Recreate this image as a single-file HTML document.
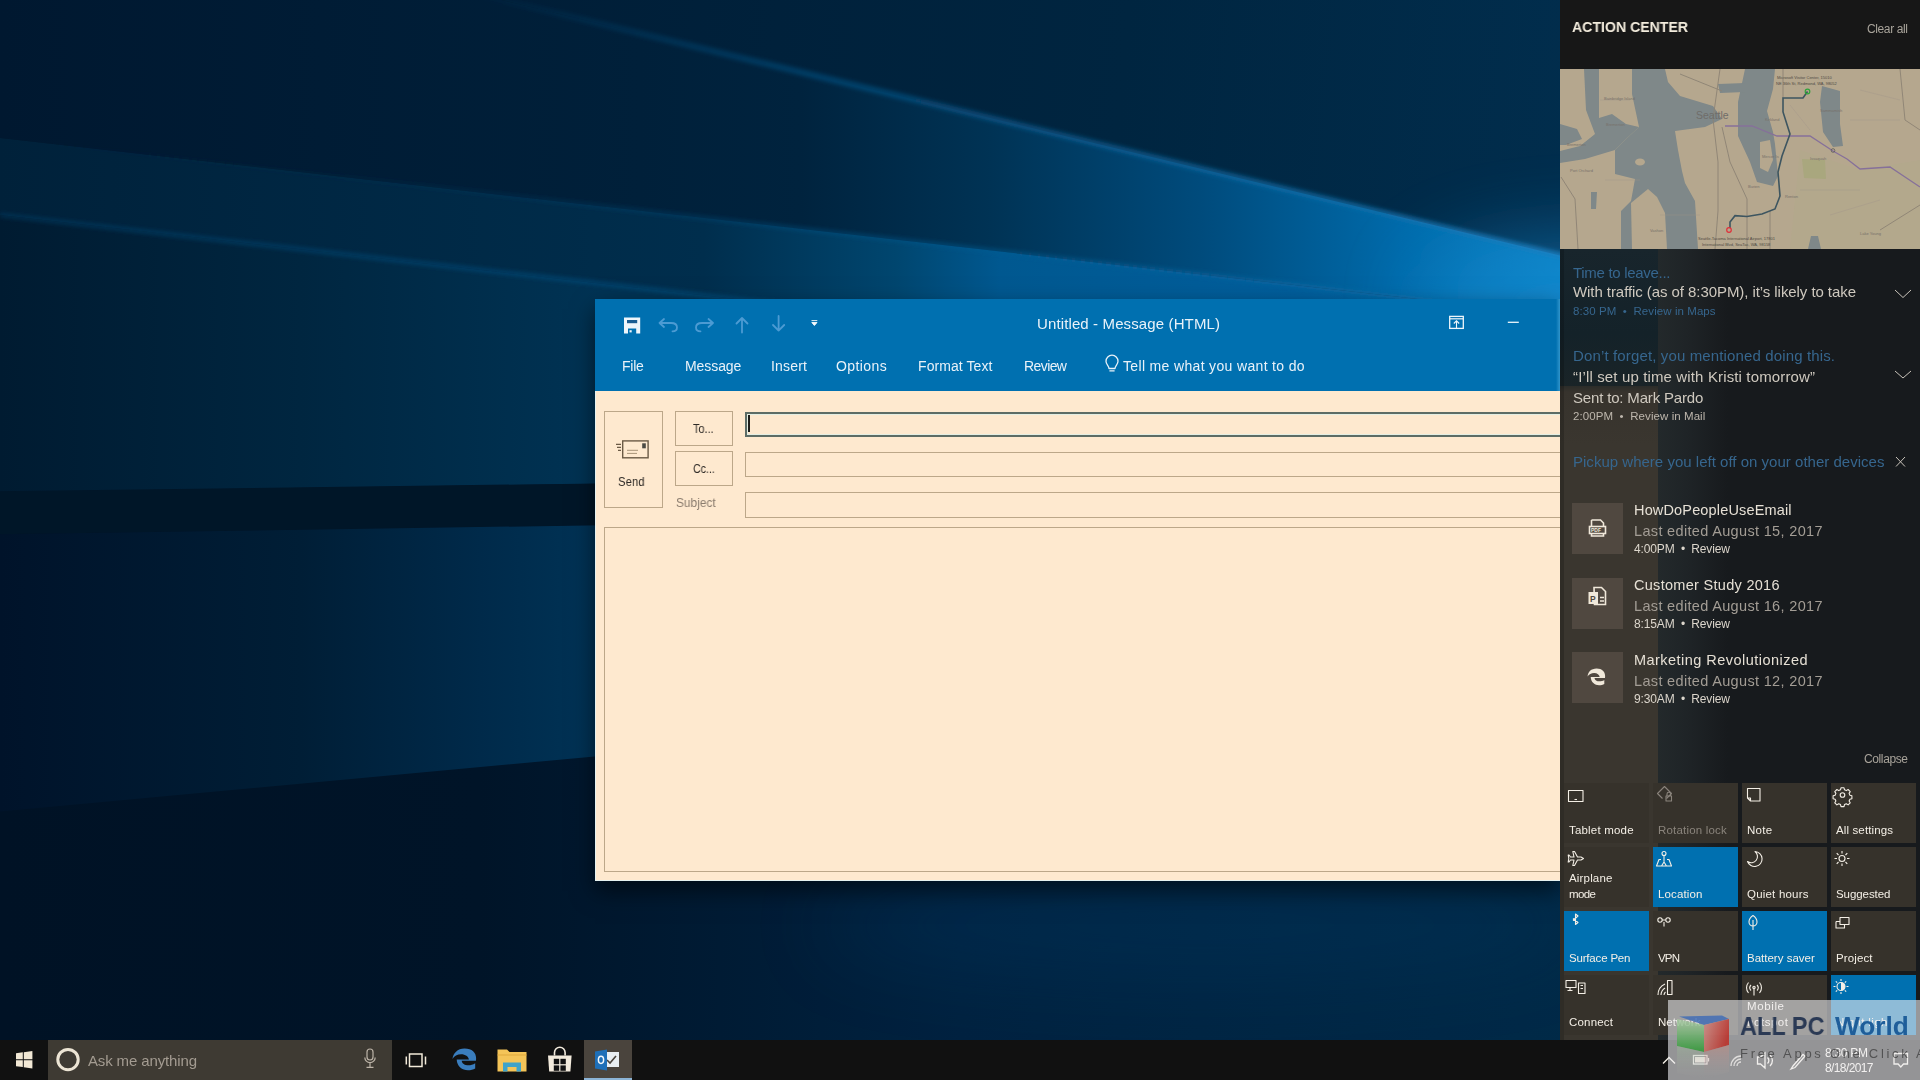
<!DOCTYPE html>
<html><head><meta charset="utf-8">
<style>
html,body{-webkit-font-smoothing:antialiased;margin:0;padding:0;width:1920px;height:1080px;overflow:hidden;background:#031a33;font-family:"Liberation Sans",sans-serif;}
.a{position:absolute;}
.t{position:absolute;white-space:pre;line-height:1;will-change:transform;}
#wall{position:absolute;left:0;top:0;width:1920px;height:1040px;}
#win{position:absolute;left:595px;top:299px;width:965px;height:582px;background:#fee9cf;box-shadow:0 10px 22px rgba(0,0,0,0.55);}
#ribbon{position:absolute;left:0;top:0;width:965px;height:92px;background:#0070b0;}
#ac{position:absolute;left:1560px;top:0;width:360px;height:1040px;background:#1b1d21;overflow:hidden;}
#tb{position:absolute;left:0;top:1040px;width:1920px;height:40px;background:#111111;}
</style></head><body>
<svg id="wall" width="1920" height="1040" viewBox="0 0 1920 1040">
 <defs>
  <filter id="bl2" filterUnits="userSpaceOnUse" x="-200" y="-200" width="2320" height="1440"><feGaussianBlur stdDeviation="2"/></filter>
  <filter id="bl8" filterUnits="userSpaceOnUse" x="-200" y="-200" width="2320" height="1440"><feGaussianBlur stdDeviation="8"/></filter>
  <filter id="bl40" filterUnits="userSpaceOnUse" x="-200" y="-200" width="2320" height="1440"><feGaussianBlur stdDeviation="40"/></filter>
  <linearGradient id="gTop" gradientUnits="userSpaceOnUse" x1="0" y1="0" x2="1600" y2="150">
   <stop offset="0" stop-color="#001830"/>
   <stop offset="0.7" stop-color="#002540"/>
   <stop offset="1" stop-color="#012e4e"/>
  </linearGradient>
  <linearGradient id="gA" gradientUnits="userSpaceOnUse" x1="0" y1="0" x2="1600" y2="0">
   <stop offset="0" stop-color="#001830"/>
   <stop offset="0.4" stop-color="#00203a"/>
   <stop offset="0.5" stop-color="#00233e"/>
   <stop offset="0.62" stop-color="#003355"/>
   <stop offset="0.75" stop-color="#004b7c"/>
   <stop offset="0.875" stop-color="#006aaa"/>
   <stop offset="1" stop-color="#0a86c8"/>
  </linearGradient>
  <linearGradient id="gB" gradientUnits="userSpaceOnUse" x1="0" y1="0" x2="1600" y2="0">
   <stop offset="0" stop-color="#00213a"/>
   <stop offset="0.44" stop-color="#002e4d"/>
   <stop offset="0.56" stop-color="#00466f"/>
   <stop offset="0.625" stop-color="#005890"/>
   <stop offset="0.81" stop-color="#005e9c"/>
   <stop offset="1" stop-color="#0a7cc0"/>
  </linearGradient>
  <linearGradient id="gP1" gradientUnits="userSpaceOnUse" x1="0" y1="0" x2="600" y2="0">
   <stop offset="0" stop-color="#001b31"/>
   <stop offset="0.5" stop-color="#002640"/>
   <stop offset="1" stop-color="#003354"/>
  </linearGradient>
  <linearGradient id="gP2" gradientUnits="userSpaceOnUse" x1="0" y1="0" x2="600" y2="0">
   <stop offset="0" stop-color="#00132a"/>
   <stop offset="0.5" stop-color="#001e36"/>
   <stop offset="0.8" stop-color="#002a4a"/>
   <stop offset="1" stop-color="#003356"/>
  </linearGradient>
  <linearGradient id="gBot" gradientUnits="userSpaceOnUse" x1="0" y1="0" x2="1600" y2="0">
   <stop offset="0" stop-color="#001225"/>
   <stop offset="0.3" stop-color="#001428"/>
   <stop offset="0.6" stop-color="#002240"/>
   <stop offset="1" stop-color="#002a48"/>
  </linearGradient>
  <linearGradient id="sA" gradientUnits="userSpaceOnUse" x1="460" y1="0" x2="1620" y2="0"><stop offset="0" stop-color="#0a5a90" stop-opacity="0"/><stop offset="0.3" stop-color="#0a5a90" stop-opacity="0.5"/><stop offset="1" stop-color="#1a7ab8" stop-opacity="0.9"/></linearGradient>
  <linearGradient id="sB" gradientUnits="userSpaceOnUse" x1="0" y1="0" x2="1620" y2="0"><stop offset="0" stop-color="#034068" stop-opacity="0"/><stop offset="0.2" stop-color="#034068" stop-opacity="0.1"/><stop offset="0.6" stop-color="#0a5a90" stop-opacity="0.6"/><stop offset="1" stop-color="#1a7ab8" stop-opacity="0.8"/></linearGradient>
  <linearGradient id="sC" gradientUnits="userSpaceOnUse" x1="0" y1="0" x2="1620" y2="0"><stop offset="0" stop-color="#064c7c" stop-opacity="0.4"/><stop offset="0.4" stop-color="#064c7c" stop-opacity="0.75"/><stop offset="1" stop-color="#1a7ab8" stop-opacity="0.8"/></linearGradient>
 </defs>
 <rect width="1920" height="1040" fill="url(#gBot)"/>
 <g>
  <path d="M-50 -50H1620V270L460 -10L-50 -10Z" fill="url(#gTop)"/>
  <path d="M460 -10L1620 270L1620 322L0 138L-50 138L-50 -10Z" fill="url(#gA)"/>
  <path d="M-50 138L0 138L1620 322L1620 400L0 215L-50 215Z" fill="url(#gB)"/>
  <path d="M-50 215L0 215L1620 400L1620 470L0 492L-50 492Z" fill="url(#gP1)"/>
  <path d="M-50 492L1620 470L1620 510L-50 535Z" fill="#001628"/>
  <path d="M-50 535L1620 510L1620 690L600 756L-50 816Z" fill="url(#gP2)"/>
 </g>
 <path d="M460 -10L1620 270" stroke="url(#sA)" stroke-width="6" filter="url(#bl2)"/>
 <path d="M0 138L1620 322" stroke="url(#sB)" stroke-width="4" filter="url(#bl2)"/>
 <path d="M0 215L1620 400" stroke="url(#sC)" stroke-width="4" filter="url(#bl2)"/>
 <ellipse cx="1200" cy="925" rx="380" ry="50" fill="#003a66" opacity="0.3" filter="url(#bl40)"/>
 <ellipse cx="1580" cy="300" rx="160" ry="60" fill="#1a90d8" opacity="0.5" filter="url(#bl40)"/>
</svg>

<div id="win">
 <div id="ribbon"></div>
</div>
<div class="a" style="left:595px;top:391px;width:1px;height:490px;background:#e6f2f0;"></div>
<div class="a" style="left:1556px;top:299px;width:4px;height:92px;background:linear-gradient(90deg,rgba(60,160,215,0),rgba(70,165,215,0.7));"></div>
<div class="a" style="left:595px;top:880px;width:965px;height:1px;background:#e6f2f0;"></div>
<!-- send box -->
<div class="a" style="left:604px;top:411px;width:57px;height:95px;border:1px solid #bca789;"></div>
<div class="a" style="left:675px;top:411px;width:56px;height:33px;border:1px solid #bca789;"></div>
<div class="a" style="left:675px;top:451px;width:56px;height:33px;border:1px solid #bca789;"></div>
<div class="a" style="left:745px;top:412px;width:900px;height:21px;border:2px solid #5d6c65;box-shadow:inset 0 0 0 1px #e3eee4;"></div>
<div class="a" style="left:748px;top:415px;width:1.5px;height:17px;background:#1d1d1a;"></div>
<div class="a" style="left:745px;top:452px;width:900px;height:23px;border:1px solid #bca789;"></div>
<div class="a" style="left:745px;top:492px;width:900px;height:24px;border:1px solid #bca789;"></div>
<div class="a" style="left:604px;top:527px;width:1000px;height:343px;border:1px solid #bca789;"></div>
<svg class="a" style="left:612px;top:436px" width="40" height="26" viewBox="612 436 40 26">
 <rect x="622.7" y="440.9" width="25.4" height="16.9" fill="none" stroke="#6b5a45" stroke-width="1.4"/>
 <rect x="642.2" y="443.3" width="3.6" height="5" fill="#4b4a44"/>
 <path d="M627 450.3h11M627 453.4h10" stroke="#a89478" stroke-width="1"/>
 <path d="M616 444.3h5M617 447.3h4M618 450.3h3" stroke="#6b5a45" stroke-width="1.2"/>
</svg>
<!-- QAT icons -->
<svg class="a" style="left:620px;top:312px" width="200" height="26" viewBox="620 312 200 26">
 <path d="M624 317.6h16.2v16H636.2v-5.2h-8.2v5.2H624z" fill="#eef6fb"/>
 <rect x="627" y="320" width="10.2" height="3.2" fill="#1a5d92"/>
 <rect x="629.5" y="330.2" width="2.2" height="2.2" fill="#eef6fb"/>
 <g fill="none" stroke="#4c9bd3" stroke-width="1.8" stroke-linecap="round" stroke-linejoin="round">
  <path d="M664 319l-4.5 4 4.5 4M660 323h11c4 0 6 2 6 4.5s-2 3.8-4.5 3.8"/>
  <path d="M708.5 319l4.5 4-4.5 4M713 323h-11c-4 0-6 2-6 4.5s2 3.8 4.5 3.8"/>
  <path d="M742 332.5V318M736.5 323.5l5.5-5.5 5.5 5.5"/>
  <path d="M778.6 316v14.5M773 325l5.6 5.6 5.6-5.6"/>
 </g>
 <path d="M811.5 320.6h5.8M811.8 322.5h5.2l-2.6 3z" stroke="#f4f8fb" stroke-width="0.9" fill="#f4f8fb"/>
</svg>
<svg class="a" style="left:1445px;top:312px" width="80" height="22" viewBox="1445 312 80 22">
 <rect x="1449.7" y="316.4" width="13.6" height="12" fill="none" stroke="#eef6fb" stroke-width="1.3"/>
 <path d="M1450 318.8h13" stroke="#eef6fb" stroke-width="1.2"/>
 <path d="M1456.5 328v-7M1453.8 323.5l2.7-2.7 2.7 2.7" stroke="#eef6fb" stroke-width="1.1" fill="none"/>
 <path d="M1507.8 322.3h11" stroke="#eef6fb" stroke-width="1.3"/>
</svg>
<svg class="a" style="left:1100px;top:352px" width="24" height="24" viewBox="1100 352 24 24">
 <path d="M1109 368.5c0-2.5-3-4-3-7.3a6 6 0 0 1 12 0c0 3.3-3 4.8-3 7.3z M1109.4 370.8h5.2" fill="none" stroke="#e9f2f9" stroke-width="1.3" stroke-linejoin="round"/>
</svg>
<div class="t" style="left:1036.60px;top:315.80px;font-size:15px;letter-spacing:0.122px;color:#e9f2f9;">Untitled - Message (HTML)</div>
<div class="t" style="left:622.00px;top:359.39px;font-size:14px;letter-spacing:-0.247px;color:#e9f2f9;">File</div>
<div class="t" style="left:685.00px;top:359.39px;font-size:14px;letter-spacing:-0.073px;color:#e9f2f9;">Message</div>
<div class="t" style="left:771.00px;top:359.39px;font-size:14px;letter-spacing:0.200px;color:#e9f2f9;">Insert</div>
<div class="t" style="left:836.00px;top:359.39px;font-size:14px;letter-spacing:0.412px;color:#e9f2f9;">Options</div>
<div class="t" style="left:917.50px;top:359.39px;font-size:14px;letter-spacing:0.076px;color:#e9f2f9;">Format Text</div>
<div class="t" style="left:1024.30px;top:359.39px;font-size:14px;letter-spacing:-0.584px;color:#e9f2f9;">Review</div>
<div class="t" style="left:1123.00px;top:359.39px;font-size:14px;letter-spacing:0.340px;color:#e9f2f9;">Tell me what you want to do</div>
<div class="t" style="left:618.00px;top:475.39px;font-size:13px;letter-spacing:0.000px;color:#2e2a26;transform:scaleX(0.8730);transform-origin:0.00px 0;">Send</div>
<div class="t" style="left:693.00px;top:422.51px;font-size:12.5px;letter-spacing:0.000px;color:#2e2a26;transform:scaleX(0.8720);transform-origin:0.00px 0;">To...</div>
<div class="t" style="left:693.00px;top:462.81px;font-size:12.5px;letter-spacing:0.000px;color:#2e2a26;transform:scaleX(0.8487);transform-origin:0.00px 0;">Cc...</div>
<div class="t" style="left:675.70px;top:496.61px;font-size:12.5px;letter-spacing:0.000px;color:#8a7c6e;transform:scaleX(0.9523);transform-origin:0.00px 0;">Subject</div>

<div class="a" style="left:1560px;top:0;width:360px;height:1040px;background:#171a1d;"></div>
<div class="a" style="left:1560px;top:0;width:360px;height:69px;background:#171717;"></div>
<div class="a" style="left:1658px;top:249px;width:70px;height:791px;background:linear-gradient(90deg,#23292b,#1f2427 40%,rgba(23,26,29,0));"></div>
<div class="a" style="left:1560px;top:249px;width:98px;height:142px;background:linear-gradient(180deg,#18252c,#142229 60%,#1a2427);"></div>
<div class="a" style="left:1560px;top:386px;width:98px;height:654px;background:linear-gradient(180deg,#2b2c29,#37332d 6px,#3a362f 60px);"></div>
<div class="a" style="left:1560px;top:249px;width:4px;height:791px;background:rgba(0,0,0,0.18);"></div>
<svg class="a" style="left:1560px;top:69px" width="360" height="180" viewBox="1560 69 360 180">
 <defs><filter id="mbl" x="-10%" y="-10%" width="120%" height="120%"><feGaussianBlur stdDeviation="0.6"/></filter></defs>
 <rect x="1560" y="69" width="360" height="180" fill="#b5a78e"/>
 <g filter="url(#mbl)">
 <path d="M1800 150L1860 170L1920 160V249H1790Z" fill="#b3a88c"/>
 <path d="M1802 159L1825 160L1826 179L1804 178Z" fill="#a9a77e"/>
 <g fill="#7f8889">
  <path d="M1632 69L1665 69L1668 82L1680 96L1713 106L1722 119L1705 127L1675 131L1678 150L1682 171L1685 183L1695 201L1698 249L1621 249L1621 211L1631 201L1635 179L1615 174L1615 150L1625 140L1639 127L1632 94Z"/>
  <path d="M1584 69L1599 69L1599 118L1612 114L1626 124L1639 127L1625 140L1615 150L1585 159L1560 163L1560 151L1580 146L1595 134L1586 110Z"/>
  <path d="M1560 124L1577 129L1582 139L1566 145L1560 145Z"/>
  <path d="M1591 192L1597 192L1596 209L1591 209Z"/>
  <path d="M1745 69L1775 69L1773 89L1767 111L1773 132L1775 144L1778 176L1773 186L1757 182L1750 162L1738 136L1738 102Z"/>
  <path d="M1718 84L1745 83L1745 92L1720 93Z"/>
  <path d="M1822 86L1840 91L1840 124L1843 146L1833 147L1823 132L1820 102Z"/>
  <path d="M1811 236L1818 236L1821 249L1808 249Z"/>
 </g>
 <g fill="#b5a78e">
  <path d="M1631 203L1648 189L1657 197L1665 213L1667 249L1632 249Z"/>
  <path d="M1760 142L1770 140L1773 160L1768 172L1760 168Z"/>
  <ellipse cx="1640" cy="162" rx="5" ry="3.5"/>
 </g>
 <g fill="none" stroke="#8c8274" stroke-width="0.9">
  <path d="M1720 69L1713 119L1718 162L1718 211L1715 249"/>
  <path d="M1722 127L1730 162L1747 199L1747 249"/>
  <path d="M1783 69L1783 98M1770 211L1770 249M1561 177L1575 199L1578 249M1680 74L1722 91M1880 230L1920 205M1900 69L1905 120L1920 130"/>
 </g>
 <g fill="none" stroke="#a0968a" stroke-width="0.6" opacity="0.7">
  <path d="M1600 100H1630M1605 180H1640M1660 215H1700M1800 190H1860M1830 215L1880 200M1790 105L1810 130M1860 90L1900 100M1850 120L1900 120"/>
 </g>
 </g>
 <path d="M1725 126L1752 126L1777 136L1810 136L1833 151L1847 159L1860 169L1875 168L1890 167L1905 177L1920 187" fill="none" stroke="#86709a" stroke-width="1.3"/>
 <path d="M1807.5 91.5L1803 98L1783 98L1783 112L1790 134L1782 156L1778 172L1780 196L1775 209L1762 214L1747 216.5L1735 215.7L1730 222L1730 228" fill="none" stroke="#3d5560" stroke-width="1.6"/>
 <circle cx="1833" cy="150.5" r="1.8" fill="none" stroke="#5a5a5a" stroke-width="0.8"/>
 <circle cx="1807.5" cy="91.5" r="2.3" fill="none" stroke="#2fa33a" stroke-width="1.2"/>
 <circle cx="1729" cy="230" r="2.3" fill="none" stroke="#e0303a" stroke-width="1.2"/>
 <text x="1696" y="118.5" font-size="10.5" fill="#6f6d69" font-family="Liberation Sans">Seattle</text>
 <g fill="#4f4a43" font-size="4" font-family="Liberation Sans">
  <text x="1777" y="79">Microsoft Visitor Center, 15010</text>
  <text x="1776" y="85">NE 36th St, Redmond, WA, 98052</text>
  <text x="1698" y="240">Seattle-Tacoma International Airport, 17801</text>
  <text x="1702" y="246">International Blvd, SeaTac, WA, 98158</text>
 </g>
 <g fill="#77716a" font-size="4" font-family="Liberation Sans">
  <text x="1604" y="100">Bainbridge Island</text><text x="1606" y="126">Bremerton</text>
  <text x="1567" y="146">Bremerton</text><text x="1570" y="172">Port Orchard</text>
  <text x="1765" y="121">Kirkland</text><text x="1820" y="112">Sammamish</text>
  <text x="1810" y="160">Issaquah</text><text x="1762" y="158">Mercer Is</text>
  <text x="1785" y="198">Renton</text><text x="1748" y="188">Burien</text>
  <text x="1650" y="232">Vashon</text><text x="1860" y="235">Lake Young</text>
 </g>
</svg>

<div class="a" style="left:1572px;top:503px;width:51px;height:51px;background:#504840;"></div>
<div class="a" style="left:1572px;top:578px;width:51px;height:51px;background:#504840;"></div>
<div class="a" style="left:1572px;top:652px;width:51px;height:51px;background:#504840;"></div>
<svg class="a" style="left:1880px;top:280px" width="40" height="200" viewBox="1880 280 40 200">
 <g fill="none" stroke="#c9c3ba" stroke-width="1">
 <path d="M1895 290l8 7.5 8-7.5"/>
 <path d="M1895 371l8 7 8-7"/>
 <path d="M1896 457l9 9.5M1905 457l-9 9.5"/>
 </g>
</svg>
<div class="a" style="left:1564px;top:783px;width:85px;height:60px;background:#36322b;"></div>
<div class="a" style="left:1653px;top:783px;width:85px;height:60px;background:#36322b;"></div>
<div class="a" style="left:1742px;top:783px;width:85px;height:60px;background:#36322b;"></div>
<div class="a" style="left:1831px;top:783px;width:85px;height:60px;background:#36322b;"></div>
<div class="a" style="left:1564px;top:847px;width:85px;height:60px;background:#36322b;"></div>
<div class="a" style="left:1653px;top:847px;width:85px;height:60px;background:#0070b0;"></div>
<div class="a" style="left:1742px;top:847px;width:85px;height:60px;background:#36322b;"></div>
<div class="a" style="left:1831px;top:847px;width:85px;height:60px;background:#36322b;"></div>
<div class="a" style="left:1564px;top:911px;width:85px;height:60px;background:#0070b0;"></div>
<div class="a" style="left:1653px;top:911px;width:85px;height:60px;background:#36322b;"></div>
<div class="a" style="left:1742px;top:911px;width:85px;height:60px;background:#0070b0;"></div>
<div class="a" style="left:1831px;top:911px;width:85px;height:60px;background:#36322b;"></div>
<div class="a" style="left:1564px;top:975px;width:85px;height:60px;background:#36322b;"></div>
<div class="a" style="left:1653px;top:975px;width:85px;height:60px;background:#36322b;"></div>
<div class="a" style="left:1742px;top:975px;width:85px;height:60px;background:#36322b;"></div>
<div class="a" style="left:1831px;top:975px;width:85px;height:60px;background:#0070b0;"></div>

<div class="t" style="left:1572.20px;top:19.40px;font-size:15px;letter-spacing:0.000px;color:#f3ecdd;font-weight:700;transform:scaleX(0.9408);transform-origin:0.00px 0;">ACTION CENTER</div>
<div class="t" style="left:1866.60px;top:23.24px;font-size:12px;letter-spacing:-0.380px;color:#a8a39a;">Clear all</div>
<div class="t" style="left:1573.00px;top:264.80px;font-size:15px;letter-spacing:-0.300px;color:#36668e;">Time to leave...</div>
<div class="t" style="left:1573.00px;top:283.90px;font-size:15px;letter-spacing:-0.068px;color:#cfc9bf;">With traffic (as of 8:30PM), it’s likely to take</div>
<div class="t" style="left:1573.00px;top:306.26px;font-size:11.5px;letter-spacing:0.071px;color:#36668e;">8:30 PM  •  Review in Maps</div>
<div class="t" style="left:1573.00px;top:347.90px;font-size:15px;letter-spacing:0.137px;color:#36668e;">Don’t forget, you mentioned doing this.</div>
<div class="t" style="left:1573.00px;top:368.90px;font-size:15px;letter-spacing:0.139px;color:#cfc9bf;">“I’ll set up time with Kristi tomorrow”</div>
<div class="t" style="left:1573.00px;top:389.60px;font-size:15px;letter-spacing:-0.168px;color:#cfc9bf;">Sent to: Mark Pardo</div>
<div class="t" style="left:1573.00px;top:410.86px;font-size:11.5px;letter-spacing:0.072px;color:#bdb6ac;">2:00PM  •  Review in Mail</div>
<div class="t" style="left:1573.00px;top:453.90px;font-size:15px;letter-spacing:0.015px;color:#36668e;">Pickup where you left off on your other devices</div>
<div class="t" style="left:1634.00px;top:503.12px;font-size:14.5px;letter-spacing:0.155px;color:#e6e0d5;">HowDoPeopleUseEmail</div>
<div class="t" style="left:1634.00px;top:523.52px;font-size:14.5px;letter-spacing:0.335px;color:#a39d95;">Last edited August 15, 2017</div>
<div class="t" style="left:1634.00px;top:543.14px;font-size:12px;letter-spacing:-0.143px;color:#dcd6cc;">4:00PM  •  Review</div>
<div class="t" style="left:1634.00px;top:578.12px;font-size:14.5px;letter-spacing:0.294px;color:#e6e0d5;">Customer Study 2016</div>
<div class="t" style="left:1634.00px;top:598.52px;font-size:14.5px;letter-spacing:0.335px;color:#a39d95;">Last edited August 16, 2017</div>
<div class="t" style="left:1634.00px;top:618.14px;font-size:12px;letter-spacing:-0.143px;color:#dcd6cc;">8:15AM  •  Review</div>
<div class="t" style="left:1634.00px;top:653.12px;font-size:14.5px;letter-spacing:0.464px;color:#e6e0d5;">Marketing Revolutionized</div>
<div class="t" style="left:1634.00px;top:673.52px;font-size:14.5px;letter-spacing:0.335px;color:#a39d95;">Last edited August 12, 2017</div>
<div class="t" style="left:1634.00px;top:693.14px;font-size:12px;letter-spacing:-0.143px;color:#dcd6cc;">9:30AM  •  Review</div>
<div class="t" style="left:1863.80px;top:752.64px;font-size:12px;letter-spacing:-0.383px;color:#a8a39a;">Collapse</div>

<!-- tile icons -->
<svg class="a" style="left:1560px;top:780px" width="360" height="260" viewBox="1560 780 360 260">
 <g fill="none" stroke="#f4efe6" stroke-width="1.1" stroke-linejoin="round">
  <rect x="1568.5" y="790.5" width="14.5" height="11"/><path d="M1574.5 799.5h2.5"/>
  <g stroke="#8a847c"><path d="M1664.5 786.5l7 7-5 5M1664.5 786.5l-7 7 5 5"/><rect x="1666" y="796" width="5.5" height="5"/><path d="M1667 796v-2a1.8 1.8 0 0 1 3.6 0v2"/></g>
  <path d="M1747.5 788.5h12.5v12.5h-9.5l-3-3z M1747.5 798l3 0v3"/>
  <circle cx="1842.5" cy="795" r="2.3"/><path d="M1841 787.8h3l.5 2 1.8.8 1.8-1.1 2.1 2.1-1.1 1.8.8 1.8 2 .5v3l-2 .5-.8 1.8 1.1 1.8-2.1 2.1-1.8-1.1-1.8.8-.5 2h-3l-.5-2-1.8-.8-1.8 1.1-2.1-2.1 1.1-1.8-.8-1.8-2-.5v-3l2-.5.8-1.8-1.1-1.8 2.1-2.1 1.8 1.1 1.8-.8z"/>
  <path d="M1583.5 858.5L1581 857H1577.5L1574.5 851.5H1572.8L1574 857H1570.5L1569 855H1568.2L1568.8 858.5L1568.2 862H1569L1570.5 860H1574L1572.8 865.5H1574.5L1577.5 860H1581Z"/>
  <circle cx="1664" cy="853.5" r="2"/><path d="M1664 855.5v6M1661 859.5h-2l-2.5 6.5h15l-2.5-6.5h-2M1661.5 866l2.5-4 2.5 4"/>
  <path d="M1755 851.5a7.5 7.5 0 1 1-7.5 10 6 6 0 0 0 7.5-10z"/>
  <circle cx="1842" cy="858.5" r="3"/><path d="M1842 851v2.5M1842 863.5v2.5M1834.5 858.5h2.5M1847 858.5h2.5M1836.7 853.2l1.8 1.8M1845.5 862l1.8 1.8M1836.7 863.8l1.8-1.8M1845.5 855l1.8-1.8"/>
  <path d="M1573 918.5l5 4-2.5 2V914l2.5 2-5 4.5"/>
  <circle cx="1660" cy="920" r="2.2"/><circle cx="1668" cy="920" r="2.2"/><path d="M1662.2 920h3.6M1664 922v4.5"/>
  <path d="M1753 915.5c3 2 4 4 4 6.5a4 4 0 0 1-8 0c0-2.5 1-4.5 4-6.5zM1753 920v10"/>
  <rect x="1840" y="917.5" width="9" height="7"/><path d="M1836 921.5h4M1836 921.5v6.5h8.5v-3.5"/>
  <rect x="1566" y="980.5" width="10" height="7"/><path d="M1570 987.5v3M1567.5 990.5h5"/><rect x="1578.5" y="983" width="6.5" height="10.5"/><path d="M1580.5 985.5h2.5M1580.5 988.5h2.5"/>
  <path d="M1658 995a12 12 0 0 1 7-11M1661 995a8.5 8.5 0 0 1 4-7M1664 995a4.5 4.5 0 0 1 1.5-3"/><rect x="1667.5" y="980.5" width="4.5" height="14"/>
  <path d="M1754 987.5v8M1751 985a4 4 0 0 0 0 5.5M1757 985a4 4 0 0 1 0 5.5M1748.5 982.5a8 8 0 0 0 0 10.5M1759.5 982.5a8 8 0 0 1 0 10.5"/><circle cx="1754" cy="987.5" r="1.2"/>
  <circle cx="1841" cy="986.5" r="4"/><path d="M1841 979v2M1841 992v2M1833.5 986.5h2M1846.5 986.5h2M1835.8 981.3l1.4 1.4M1844.8 990.3l1.4 1.4M1835.8 991.7l1.4-1.4M1844.8 982.7l1.4-1.4"/>
 </g>
 <path d="M1841 982.5a4 4 0 0 1 0 8z" fill="#f4efe6"/>
</svg>
<div class="t" style="left:1568.50px;top:825.06px;font-size:11.5px;letter-spacing:0.192px;color:#f4efe6;">Tablet mode</div>
<div class="t" style="left:1657.50px;top:825.06px;font-size:11.5px;letter-spacing:0.181px;color:#8a847c;">Rotation lock</div>
<div class="t" style="left:1746.50px;top:825.06px;font-size:11.5px;letter-spacing:0.245px;color:#f4efe6;">Note</div>
<div class="t" style="left:1835.50px;top:825.06px;font-size:11.5px;letter-spacing:0.127px;color:#f4efe6;">All settings</div>
<div class="t" style="left:1568.50px;top:873.26px;font-size:11.5px;letter-spacing:0.171px;color:#f4efe6;">Airplane</div>
<div class="t" style="left:1568.50px;top:889.26px;font-size:11.5px;letter-spacing:-0.583px;color:#f4efe6;">mode</div>
<div class="t" style="left:1657.50px;top:889.06px;font-size:11.5px;letter-spacing:0.147px;color:#f4efe6;">Location</div>
<div class="t" style="left:1746.50px;top:889.06px;font-size:11.5px;letter-spacing:0.205px;color:#f4efe6;">Quiet hours</div>
<div class="t" style="left:1835.50px;top:889.06px;font-size:11.5px;letter-spacing:-0.071px;color:#f4efe6;">Suggested</div>
<div class="t" style="left:1568.50px;top:953.06px;font-size:11.5px;letter-spacing:-0.181px;color:#f4efe6;">Surface Pen</div>
<div class="t" style="left:1657.50px;top:953.06px;font-size:11.5px;letter-spacing:-0.816px;color:#f4efe6;">VPN</div>
<div class="t" style="left:1746.50px;top:953.06px;font-size:11.5px;letter-spacing:0.001px;color:#f4efe6;">Battery saver</div>
<div class="t" style="left:1835.50px;top:953.06px;font-size:11.5px;letter-spacing:0.122px;color:#f4efe6;">Project</div>
<div class="t" style="left:1568.50px;top:1017.06px;font-size:11.5px;letter-spacing:0.194px;color:#f4efe6;">Connect</div>
<div class="t" style="left:1657.50px;top:1017.06px;font-size:11.5px;letter-spacing:0.040px;color:#f4efe6;">Network</div>
<div class="t" style="left:1746.50px;top:1001.26px;font-size:11.5px;letter-spacing:0.627px;color:#f4efe6;">Mobile</div>
<div class="t" style="left:1746.50px;top:1017.26px;font-size:11.5px;letter-spacing:0.547px;color:#f4efe6;">hotspot</div>
<div class="t" style="left:1835.50px;top:1017.06px;font-size:11.5px;letter-spacing:0.388px;color:#f4efe6;">Night light</div>

<!-- pickup icons -->
<svg class="a" style="left:1580px;top:510px" width="40" height="190" viewBox="1580 510 40 190">
 <g fill="none" stroke="#f0e8da" stroke-width="1.6">
  <path d="M1591.5 520h9l3 3v4M1591.5 533v3h12v-3M1591.5 527v-7"/>
  <rect x="1589.5" y="526.5" width="16" height="7"/>
  <path d="M1594 587.5h7.5l4 4v13h-11z"/>
  <path d="M1600 601h4M1600 597.5h4"/>
 </g>
 <g fill="#f0e8da" font-family="Liberation Sans" font-weight="700" font-size="5"><text x="1591" y="532.2">PDF</text></g>
 <rect x="1588.5" y="592" width="9.5" height="12" fill="#f0e8da"/>
 <text x="1590" y="601.5" font-family="Liberation Sans" font-weight="700" font-size="8.5" fill="#504840">P</text>
 <path d="M1596.6 668.5c-5.5 0-8.8 3.6-9 8 1.3-2.3 3.8-3.5 6.5-3.5 3.2 0 5.3 1.8 5.6 4h-9c.2 5.2 4.2 8.2 8.3 8.2 2.1 0 4-.5 5.3-1.3v-4c-1.5 1-3.2 1.4-4.9 1.4-2.7 0-4.7-1.3-4.9-3.4h10.5c.1-.6.1-1.2.1-1.8 0-4.4-3-7.6-8.5-7.6z" fill="#f0e8da"/>
</svg>

<div id="tb"></div>
<div class="a" style="left:48px;top:1040px;width:344px;height:40px;background:#3e3a33;"></div>
<div class="a" style="left:584px;top:1040px;width:48px;height:40px;background:#4a443d;"></div>
<div class="a" style="left:584px;top:1078px;width:48px;height:2px;background:#8cb4d6;"></div>
<svg class="a" style="left:0;top:1040px" width="640" height="40" viewBox="0 1040 640 40">
 <g fill="#f2e8d5">
  <path d="M16 1053.2L22.8 1052.3V1059.2H16Z"/><path d="M23.8 1052.2L32.4 1051V1059.2H23.8Z"/>
  <path d="M16 1060.2H22.8V1067.1L16 1066.2Z"/><path d="M23.8 1060.2H32.4V1068.4L23.8 1067.2Z"/>
 </g>
 <circle cx="68" cy="1059.6" r="10.2" fill="none" stroke="#ece4d4" stroke-width="3"/>
 <g fill="none" stroke="#bdb4a8" stroke-width="1.2">
  <rect x="367" y="1049" width="6" height="11" rx="3"/>
  <path d="M364.8 1057.5a5.2 5.2 0 0 0 10.4 0M370 1063v4M366.5 1067.3h7"/>
 </g>
 <g fill="none" stroke="#f2ead9" stroke-width="1.5">
  <rect x="409.5" y="1054" width="12.5" height="12.5"/>
  <path d="M406.3 1056.5v8M425.5 1056.5v8"/>
 </g>
 <path d="M464.5 1048.5c-7 0-11.5 5-12 10.5 1.5-3 5-4.8 8.6-4.8 4.3 0 7.4 2.3 7.8 5.3h-12.2c.2 6.8 5.6 10.8 11.2 10.8 2.9 0 5.4-.7 7.3-1.8v-5.2c-2.1 1.4-4.5 2-6.8 2-3.6 0-6.4-1.8-6.7-4.6h14.2c.2-.8.2-1.6.2-2.4 0-5.8-4-9.8-11.6-9.8z" fill="#3a7dbd"/>
 <path d="M497.5 1049.5h9.5l2.5 2.5h17v19.5h-29z" fill="#f4c458"/>
 <path d="M497.5 1055h29" stroke="#e0a93d" stroke-width="1"/>
 <path d="M503 1071.5v-9h18v9h-4.5v-4.5h-9v4.5z" fill="#3fa3c9"/>
 <path d="M548 1055.5h23.6l-1.2 16h-21.2z" fill="#f3ebdd"/>
 <path d="M554.5 1055.5v-3a5.3 5.3 0 0 1 10.6 0v3" fill="none" stroke="#f3ebdd" stroke-width="1.6"/>
 <g fill="#111"><rect x="553.8" y="1058.8" width="5.4" height="5.4"/><rect x="560.4" y="1058.8" width="5.4" height="5.4"/><rect x="553.8" y="1065.4" width="5.4" height="5.4"/><rect x="560.4" y="1065.4" width="5.4" height="5.4"/></g>
 <rect x="604" y="1052" width="15" height="15" fill="#e9eef2"/>
 <path d="M607 1060l3 3 6-7" fill="none" stroke="#4a443d" stroke-width="1.6"/>
 <path d="M595 1051.5l12-2v21l-12-2z" fill="#1e6fb8"/>
 <ellipse cx="601" cy="1059.8" rx="2.6" ry="3.6" fill="none" stroke="#f2f6fa" stroke-width="1.5"/>
</svg>
<div class="t" style="left:88.40px;top:1052.50px;font-size:15px;letter-spacing:-0.137px;color:#a39b91;">Ask me anything</div>
<div class="t" style="left:1824.50px;top:1046.84px;font-size:12px;letter-spacing:-0.283px;color:#f7f3ec;">8:30 PM</div>
<div class="t" style="left:1824.50px;top:1061.54px;font-size:12px;letter-spacing:-0.612px;color:#f7f3ec;">8/18/2017</div>

<!-- tray icons -->
<svg class="a" style="left:1640px;top:1040px" width="280" height="40" viewBox="1640 1040 280 40">
 <g fill="none" stroke="#f5f0e6" stroke-width="1.3">
  <path d="M1663 1063.5l6-6 6 6"/>
  <rect x="1693.5" y="1055.5" width="13.5" height="8.5"/>
  <path d="M1708.5 1058v3.5"/>
  <path d="M1731 1066a10 10 0 0 1 10-10M1734 1066a7 7 0 0 1 7-7M1737 1066a4 4 0 0 1 4-4" opacity="0.8"/>
  <path d="M1757.5 1057h3l4.5-4v15l-4.5-4h-3zM1767.5 1057.5a4 4 0 0 1 0 6M1770 1055a7.5 7.5 0 0 1 0 11"/>
  <path d="M1791 1069l2-3 10-11.5 2 1.5-10 11.5z"/>
  <path d="M1894 1053.5h13.5v10.5h-4l-2.7 3-2.7-3H1894z"/>
 </g>
 <rect x="1695" y="1057" width="10.5" height="5.5" fill="#fbe6da"/>
</svg>
<!-- watermark -->
<div class="a" style="left:1668px;top:1000px;width:252px;height:80px;background:rgba(238,238,242,0.595);"></div>
<svg class="a" style="left:1668px;top:1000px" width="252" height="80" viewBox="1668 1000 252 80">
 <defs>
  <linearGradient id="cg1" x1="0" y1="0" x2="0" y2="1"><stop offset="0" stop-color="#a9c9a4"/><stop offset="1" stop-color="#2a9a30"/></linearGradient>
  <linearGradient id="cg2" x1="0" y1="0" x2="1" y2="0.4"><stop offset="0" stop-color="#cf8d84"/><stop offset="1" stop-color="#c02a22"/></linearGradient>
  <linearGradient id="cg3" x1="0" y1="0" x2="0" y2="1"><stop offset="0" stop-color="#9fbf9a" stop-opacity="0.5"/><stop offset="1" stop-color="#a8a6a4" stop-opacity="0"/></linearGradient>
  <linearGradient id="cg4" x1="0" y1="0" x2="0" y2="1"><stop offset="0" stop-color="#c98880" stop-opacity="0.6"/><stop offset="1" stop-color="#a8a6a4" stop-opacity="0"/></linearGradient>
 </defs>
 <g opacity="0.82"><path d="M1679 1016.5L1722 1015.5L1729 1019L1704 1025Z" fill="#3f6db6"/>
 <path d="M1677 1019L1704 1025L1704 1052L1677 1046Z" fill="url(#cg1)"/>
 <path d="M1704 1025L1729 1019L1729 1045L1704 1052Z" fill="url(#cg2)"/>
 <path d="M1677 1046L1704 1052L1704 1079L1677 1073Z" fill="url(#cg3)"/>
 <path d="M1704 1052L1729 1045L1729 1072L1704 1079Z" fill="url(#cg4)"/></g>
</svg>
<div class="t" style="left:1740.00px;top:1013.38px;font-size:26px;letter-spacing:0.000px;color:#2b3a55;font-weight:700;transform:scaleX(0.9040);transform-origin:0.00px 0;">ALL PC</div>
<div class="t" style="left:1834.70px;top:1013.38px;font-size:26px;letter-spacing:0.000px;color:#1f5e9a;font-weight:700;transform:scaleX(1.0083);transform-origin:0.00px 0;">World</div>
<div class="t" style="left:1740.00px;top:1047.39px;font-size:13px;letter-spacing:1.363px;color:rgba(60,60,60,0.75);letter-spacing:2.7px;">Free Apps One Click Away</div>

</body></html>
